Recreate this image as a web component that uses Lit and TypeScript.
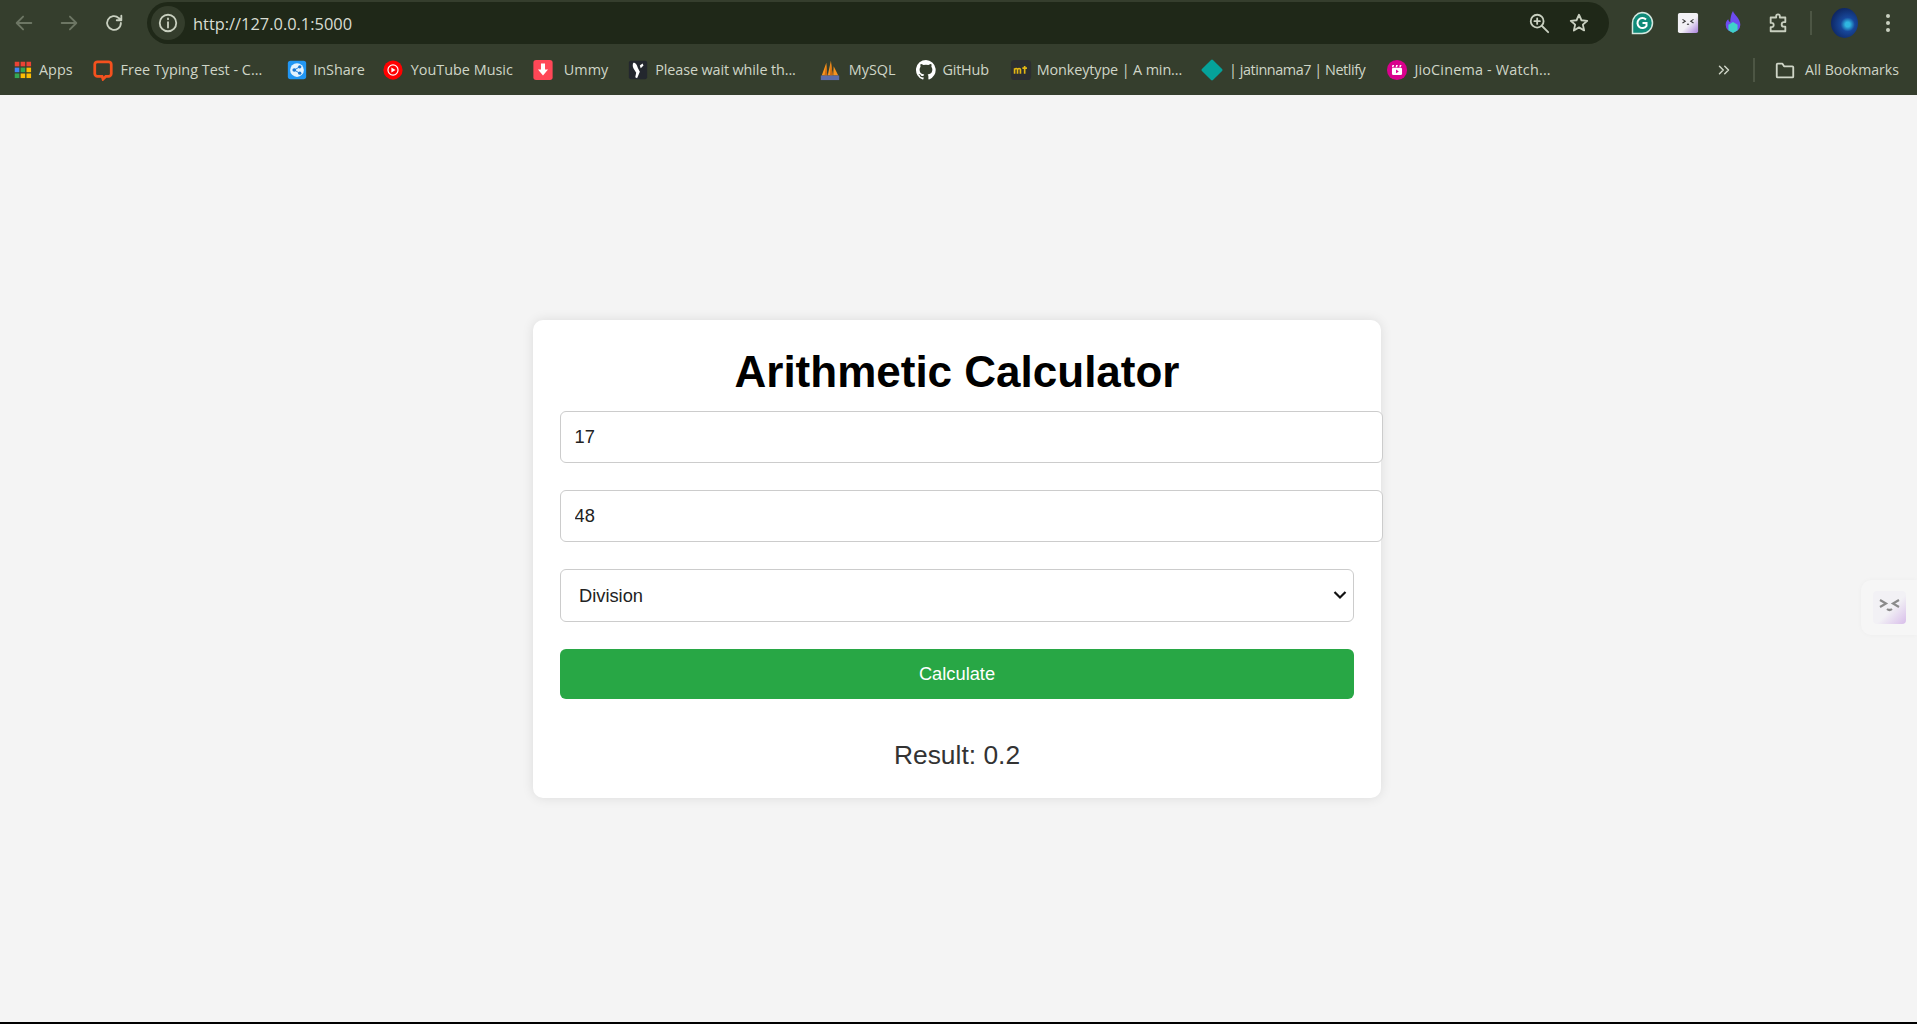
import { LitElement, css, html, svg } from "lit";
import { customElement, state } from "lit/decorators.js";

const chromeIcon = (d: unknown, size = 22, cls = "") =>
  html`<svg class=${cls} width=${size} height=${size} viewBox="0 0 24 24" fill="none" stroke="currentColor" stroke-width="2" stroke-linecap="round" stroke-linejoin="round">${d}</svg>`;

const favicons: Record<string, unknown> = {
  apps: svg`<g>
    ${[0, 1, 2].flatMap((r) =>
      [0, 1, 2].map((c) => {
        const colors = [["#ea4335", "#ea4335", "#ea4335"], ["#4285f4", "#34a853", "#fbbc04"], ["#34a853", "#fbbc04", "#fbbc04"]];
        return svg`<rect x=${3 + c * 6.4} y=${3 + r * 6.4} width="5" height="5" fill=${colors[r][c]}></rect>`;
      })
    )}
  </g>`,
  typing: svg`<path d="M6 3h12a3 3 0 0 1 3 3v10a3 3 0 0 1-3 3h-3l-3 3-1-3H6a3 3 0 0 1-3-3V6a3 3 0 0 1 3-3z" fill="none" stroke="#f4511e" stroke-width="3"></path>`,
  inshare: svg`<rect x="2" y="2" width="20" height="20" rx="3" fill="#2196f3"></rect><circle cx="12" cy="12" r="7.5" fill="#e3f2fd"></circle><circle cx="9" cy="12" r="2" fill="#1976d2"></circle><circle cx="15" cy="8.5" r="1.8" fill="#1976d2"></circle><circle cx="15" cy="15.5" r="1.8" fill="#1976d2"></circle><path d="M9 12l6-3.5M9 12l6 3.5" stroke="#1976d2" stroke-width="1"></path>`,
  yt: svg`<circle cx="12" cy="12" r="10.5" fill="#f00"></circle><circle cx="12" cy="12" r="5.5" fill="none" stroke="#fff" stroke-width="1.3"></circle><path d="M10.2 9.2v5.6l4.6-2.8z" fill="#fff"></path>`,
  ummy: svg`<rect x="1.500" y="1" width="21" height="22" rx="3" fill="#ff4757"></rect><path d="M9.8 5h4.4v6.5h3.3L12 18l-5.500-6.500h3.300z" fill="#fff"></path>`,
  wait: svg`<rect x="2" y="2" width="20" height="20" rx="2" fill="#23272e"></rect><path d="M7 4c3 0 4 3 5 6l2 4-3 7-2-1 1-5-3-5c-1-2-1-5 0-6z" fill="#fff"></path><path d="M14 7l3-2 1 2-3 3z" fill="#fff"></path>`,
  mysql: svg`<path d="M3 18L8 4l1 14zM9.500 18L13 2l2 16zM15.500 18L16 8l5 10z" fill="#f7931e"></path><path d="M8 6l1 12H6zM13 4l2 14h-3z" fill="#c96a10"></path><rect x="2" y="18" width="20" height="5" fill="#5c6ca8"></rect>`,
  github: svg`<path fill="#fff" d="M12 1a11 11 0 0 0-3.500 21.400c.6.100.8-.2.8-.5v-2c-3.100.7-3.700-1.300-3.700-1.300-.5-1.300-1.200-1.600-1.200-1.600-1-.7.100-.7.100-.7 1.100.1 1.700 1.100 1.700 1.100 1 1.700 2.600 1.200 3.200.9.100-.7.400-1.200.7-1.500-2.500-.3-5.100-1.200-5.100-5.400 0-1.200.4-2.200 1.100-3-.1-.3-.5-1.400.1-2.900 0 0 .9-.3 3 1.100a10.500 10.500 0 0 1 5.500 0c2.100-1.400 3-1.100 3-1.100.6 1.500.2 2.600.1 2.900.7.800 1.100 1.800 1.100 3 0 4.200-2.600 5.100-5.100 5.400.4.300.8 1 .8 2v3c0 .3.200.6.800.5A11 11 0 0 0 12 1z"></path>`,
  mt: svg`<rect x="1" y="1" width="22" height="22" rx="4" fill="#2c2e31"></rect><path d="M5 16v-6m0 1.500c1-1.500 3-1.500 3.200 0V16m0-4.500c1-1.500 3-1.500 3.200 0V16M13.500 10h5M16 7.500V16" stroke="#e2b714" stroke-width="1.800" fill="none"></path>`,
  netlify: svg`<rect x="3.500" y="3.500" width="17" height="17" rx="1.500" transform="rotate(45 12 12)" fill="#05a29a"></rect>`,
  jio: svg`<circle cx="12" cy="12" r="11" fill="#d9008d"></circle><rect x="6.500" y="9.500" width="11" height="8" rx="1.500" fill="#fff"></rect><path d="M7 6.500h2l-1 2.500H6.500zM11 6.500h2l-1 2.500h-1.500zM15 6.500h2l-1 2.500h-1.500z" fill="#fff"></path><path d="M11 11.500v4l3-2z" fill="#d9008d"></path>`,
};

const bookmarks = [
  { icon: "apps", label: "Apps", gap: 5, left: 12, track: 0 },
  { icon: "typing", label: "Free Typing Test - C...", gap: 7, left: 19, track: 0 },
  { icon: "inshare", label: "InShare", gap: 5, left: 24, track: 0 },
  { icon: "yt", label: "YouTube Music", gap: 7, left: 17, track: 0 },
  { icon: "ummy", label: "Ummy", gap: 10, left: 19, track: 0 },
  { icon: "wait", label: "Please wait while th...", gap: 6, left: 19, track: -0.11 },
  { icon: "mysql", label: "MySQL", gap: 8, left: 23, track: 0 },
  { icon: "github", label: "GitHub", gap: 5, left: 20, track: -0.2 },
  { icon: "mt", label: "Monkeytype | A min...", gap: 5, left: 21, track: -0.12 },
  { icon: "netlify", label: "| jatinnama7 | Netlify", gap: 6, left: 19, track: -0.44 },
  { icon: "jio", label: "JioCinema - Watch...", gap: 6, left: 21, track: 0.19 },
];

@customElement("app-root")
class AppRoot extends LitElement {
  @state() first = "17";
  @state() second = "48";
  @state() op = "Division";

  static styles = css`
    :host {
      display: flex;
      flex-direction: column;
      height: 1024px;
      overflow: hidden;
      font-family: "Liberation Sans", Arial, sans-serif;
      background: #000;
    }
    .toolbar {
      display: flex;
      align-items: center;
      height: 44px;
      padding-top: 2px;
      box-sizing: border-box;
      background: #353e2d;
      color: #c9d0c0;
      flex: none;
    }
    .nav {
      display: flex;
      align-items: center;
      gap: 23px;
      margin-left: 13px;
      width: 134px;
      flex: none;
    }
    .nav .off {
      color: #6d7664;
    }
    .omnibox {
      flex: none;
      width: 1462px;
      height: 42px;
      border-radius: 21px;
      background: #1f2818;
      display: flex;
      align-items: center;
      box-sizing: border-box;
      padding: 0 19px 0 4px;
    }
    .chip {
      width: 34px;
      height: 34px;
      border-radius: 50%;
      background: #343d2c;
      display: flex;
      align-items: center;
      justify-content: center;
      flex: none;
    }
    .url {
      margin-left: 8px;
      font: 16.4px "Open Sans", sans-serif;
      color: #d8dcd2;
      flex: 1;
    }
    .omni-actions {
      display: flex;
      gap: 18px;
      align-items: center;
    }
    .exts {
      display: flex;
      align-items: center;
      margin-left: 21px;
      gap: 23px;
    }
    .vsep {
      width: 2px;
      height: 24px;
      background: #4d5644;
      margin: 0 -1px 0 -2px;
    }
    .avatar {
      width: 27px;
      height: 30px;
      border-radius: 50%;
      background: radial-gradient(circle at 62% 55%, #2fb6e0 0 10%, #17479a 30%, #0e2560 75%);
      margin-right: 3px;
      margin-left: -3px;
    }
    .bookmarks {
      display: flex;
      align-items: center;
      height: 51px;
      background: #353e2d;
      color: #cfd5c7;
      font: 14.4px "Open Sans", sans-serif;
      flex: none;
    }
    .bm {
      display: flex;
      align-items: center;
      white-space: nowrap;
    }
    .bm svg {
      flex: none;
    }
    .bm-end {
      margin-left: auto;
      display: flex;
      align-items: center;
      padding-right: 18px;
    }
    .bm-sep {
      width: 2px;
      height: 24px;
      background: #4d5644;
      margin: 0 19px 0 20px;
    }
    .bm-label {
      margin-left: 9px;
      font-size: 14.1px;
    }
    .page {
      flex: 1;
      background: #f4f4f4;
      margin-bottom: 2px;
      display: flex;
      align-items: center;
      justify-content: center;
      padding-right: 3px;
      position: relative;
    }
    .card {
      width: 848px;
      box-sizing: border-box;
      padding: 27px 27px 28px;
      background: #fff;
      border-radius: 10px;
      box-shadow: 0 0 12px rgba(0, 0, 0, 0.1);
    }
    h1 {
      margin: 6px 0 21px;
      color: #000;
      font-size: 44px;
      line-height: 37px;
      text-align: center;
    }
    input,
    select {
      display: block;
      font: 18.3px "Liberation Sans", Arial, sans-serif;
      color: #222;
      background: #fff;
      border: 1.2px solid #ccc;
      border-radius: 6px;
      outline: none;
    }
    input {
      width: 100%;
      box-sizing: content-box;
      height: 22px;
      padding: 14px 13.5px;
      margin-bottom: 27px;
    }
    .select-wrap {
      position: relative;
      margin-bottom: 27px;
    }
    select {
      appearance: none;
      width: 100%;
      height: 53px;
      padding: 0 18px;
    }
    .chevron {
      position: absolute;
      right: 7px;
      top: 21px;
      pointer-events: none;
      color: #111;
    }
    button {
      display: block;
      width: 100%;
      height: 50px;
      border: none;
      border-radius: 6px;
      background: #28a745;
      color: #fff;
      font: 18.3px "Liberation Sans", Arial, sans-serif;
    }
    .result {
      margin-top: 41px;
      text-align: center;
      font-size: 26.4px;
      line-height: 30px;
      color: #333;
    }
    .side {
      position: absolute;
      right: 0;
      top: 485px;
      width: 56px;
      height: 55px;
      box-sizing: border-box;
      padding: 11px 0 0 12px;
      background: #f6f6f6;
      border-radius: 10px 0 0 10px;
      box-shadow: 0 0 5px rgba(0, 0, 0, 0.03);
    }
    .face {
      width: 33px;
      height: 33px;
      border-radius: 4px;
      background: linear-gradient(135deg, #f2f1f5 55%, #d8bdea);
      color: #8b8b8b;
      display: block;
    }
    .face path {
      filter: blur(0.4px);
    }
  `;

  render() {
    return html`
      <div class="toolbar">
        <div class="nav">
          ${chromeIcon(svg`<path d="M20 12H5M11 5l-7 7 7 7"></path>`, 22, "off")}
          ${chromeIcon(svg`<path d="M4 12h15M13 5l7 7-7 7"></path>`, 22, "off")}
          ${chromeIcon(svg`<path d="M19.500 12a7.500 7.500 0 1 1-2.300-5.400L20 9M20 4v5h-5"></path>`)}
        </div>
        <div class="omnibox">
          <span class="chip">
            ${chromeIcon(svg`<circle cx="12" cy="12" r="9"></circle><path d="M12 11v6M12 7v1"></path>`)}
          </span>
          <span class="url">http://127.0.0.1:5000</span>
          <span class="omni-actions">
            ${chromeIcon(svg`<circle cx="10" cy="10" r="7"></circle><path d="M15 15l7 7M10 7v6M7 10h6"></path>`)}
            ${chromeIcon(svg`<path d="M12 3l2.700 6 6.300.6-4.800 4.200 1.400 6.300L12 16.800 6.400 20.100l1.400-6.300L3 9.600 9.300 9z"></path>`)}
          </span>
        </div>
        <div class="exts">
          <svg width="24" height="26" viewBox="0 0 24 24">
            <path d="M12 1.500a10.500 10.500 0 0 1 0 21H2.500V12A10.500 10.500 0 0 1 12 1.500z" fill="#0f8a78" stroke="#d5e8e0" stroke-width="1.500"></path>
            <path d="M16 8.500a5 5 0 1 0 .5 6.500V12h-4" fill="none" stroke="#fff" stroke-width="2"></path>
          </svg>
          <svg width="22" height="22" viewBox="0 0 24 24">
            <defs>
              <linearGradient id="mf" x1="0" y1="0" x2="1" y2="1">
                <stop offset="0.55" stop-color="#f2f1f5"></stop>
                <stop offset="1" stop-color="#a97fdc"></stop>
              </linearGradient>
            </defs>
            <rect x="1" y="1" width="22" height="22" rx="2" fill="url(#mf)"></rect>
            <path d="M6 8l3 2-3 2M18 8l-3 2 3 2M11 13q1 1 2 0" fill="none" stroke="#333" stroke-width="1.200"></path>
          </svg>
          <svg width="22" height="26" viewBox="0 0 24 28">
            <path d="M12 1c1 4 8 8 8 15a8 8 0 0 1-16 0c0-3 1.500-5 3-6 0 2 1 3 2 3 0-4 1-9 3-12z" fill="#6d4bf0"></path>
            <path d="M12 13l5 3v6l-5 3-5-3v-6z" fill="#3fd0c9"></path>
          </svg>
          ${chromeIcon(svg`<path d="M4 6h6V4.500a2 2 0 0 1 4 0V6h6v5h-1.500a2.500 2.500 0 0 0 0 5H20v5H4v-4.500h1a2.300 2.300 0 0 0 0-4.600H4z"></path>`)}
          <span class="vsep"></span>
          <span class="avatar"></span>
          <svg width="8" height="22" viewBox="0 0 8 22" fill="currentColor">
            <circle cx="4" cy="4" r="2"></circle><circle cx="4" cy="11" r="2"></circle><circle cx="4" cy="18" r="2"></circle>
          </svg>
        </div>
      </div>
      <div class="bookmarks">
        ${bookmarks.map(
          (b) => html`<span class="bm" style="margin-left:${b.left}px;letter-spacing:${b.track}px">
            <svg width="22" height="22" viewBox="0 0 24 24" style="margin-right:${b.gap}px">${favicons[b.icon]}</svg>${b.label}
          </span>`
        )}
        <span class="bm-end">
          ${chromeIcon(svg`<path d="M6 7l5 5-5 5M13 7l5 5-5 5"></path>`, 18)}
          <span class="bm-sep"></span>
          ${chromeIcon(svg`<path d="M3 6a1 1 0 0 1 1-1h5l2 3h9a1 1 0 0 1 1 1v10a1 1 0 0 1-1 1H4a1 1 0 0 1-1-1z"></path>`, 22)}
          <span class="bm-label">All Bookmarks</span>
        </span>
      </div>
      <main class="page">
        <section class="card">
          <h1>Arithmetic Calculator</h1>
          <input type="number" .value=${this.first} />
          <input type="number" .value=${this.second} />
          <div class="select-wrap">
            <select>
              <option>Addition</option>
              <option>Subtraction</option>
              <option>Multiplication</option>
              <option selected>Division</option>
            </select>
            <svg class="chevron" width="14" height="10" viewBox="0 0 14 10" fill="none" stroke="currentColor" stroke-width="2.200"><path d="M1.500 2L7 7.500 12.500 2"></path></svg>
          </div>
          <button>Calculate</button>
          <div class="result">Result: 0.2</div>
        </section>
        <aside class="side">
          <svg class="face" viewBox="0 0 33 33" fill="none" stroke="currentColor" stroke-width="2.200">
            <path d="M7 9l6 3.500-6 3.500M26 9l-6 3.500 6 3.500M14 18q2.500 2 5 0"></path>
          </svg>
        </aside>
      </main>
    `;
  }
}
